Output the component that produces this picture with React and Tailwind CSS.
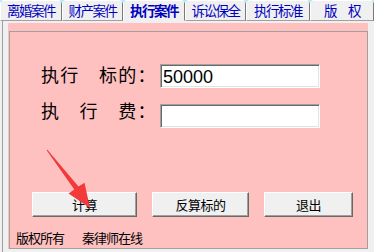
import React from "react";

const tabs = [
  { label: "离婚案件", cls: "w-[62px]" },
  { label: "财产案件", cls: "w-[61px]" },
  { label: "执行案件", cls: "w-[62px]", active: true },
  { label: "诉讼保全", cls: "w-[61px]" },
  { label: "执行标准", cls: "w-[64px]" },
  { label: "版　权", cls: "w-[64px]" },
];

function Field({ value }) {
  return (
    <div className="w-[160px] h-[24px] border border-t-[#a0a0a0] border-l-[#a0a0a0] border-r-white border-b-white shadow-[inset_1px_1px_0_#696969,inset_-1px_-1px_0_#e3e3e3] bg-white pl-[2px] pt-[2px] font-['Liberation_Sans',Arial,sans-serif] text-[18px] leading-[20px] text-black">
      {value}
    </div>
  );
}

function Btn({ children, cls }) {
  return (
    <div
      className={
        cls +
        " h-[25px] flex items-center justify-center bg-[#f0f0f0] border border-t-white border-l-white border-r-[#696969] border-b-[#696969] shadow-[inset_-1px_-1px_0_#a0a0a0] text-[13px] leading-[13px] tracking-[-0.5px] text-black"
      }
    >
      {children}
    </div>
  );
}

export default function App() {
  return (
    <div className="w-[374px] h-[252px] bg-[#f0f0f0] relative overflow-hidden font-['Noto_Sans_CJK_SC','Noto_Sans',sans-serif]">
      <div className="flex h-[21px] bg-[#b4eef8]">
        {tabs.map((t) => (
          <div
            key={t.label}
            className={
              t.cls +
              (t.active
                ? " font-bold border-b-[#f0f0f0]"
                : " border-b-[#a0a0a0]") +
              " h-[21px] flex justify-center pt-[3px] bg-[#f0f0f0] border border-l-white border-t-white border-r-[#7a7a7a] text-[13.5px] leading-[13px] tracking-[-1.5px] text-[#0000c0] [clip-path:polygon(3px_0,calc(100%_-_3px)_0,100%_3px,100%_100%,0_100%,0_3px)]"
            }
          >
            {t.label}
          </div>
        ))}
      </div>
      <div className="ml-[2px] h-[231px] border-l border-[#a0a0a0] pl-[5px] pt-[2px]">
        <div className="w-[360px] h-[226px] bg-[#ffc0c0] pl-[1px] pt-[8px]">
          <div className="h-full w-full border border-[#a0a0a0] flex flex-col text-black">
            <div className="mt-[32px] flex items-start pl-[31px] h-[24px]">
              <div className="w-[119px] mt-[1px] text-[18px] leading-[18px] tracking-[1.3px]">
                执行　标的：
              </div>
              <Field value="50000" />
            </div>
            <div className="mt-[13px] flex items-start pl-[31px]">
              <div className="w-[119px] text-[18px] leading-[18px] tracking-[1.3px]">
                执　行　费：
              </div>
              <div className="mt-[3px]">
                <Field value="" />
              </div>
            </div>
            <div className="mt-[64px] flex pl-[22px] gap-[15px]">
              <Btn cls="w-[105px]">计算</Btn>
              <Btn cls="w-[97px]">反算标的</Btn>
              <Btn cls="w-[89px]">退出</Btn>
            </div>
            <div className="mt-[13px] flex pl-[6px] text-[13px] leading-[15px] tracking-[-1px]">
              <span>版权所有</span>
              <span className="ml-[18px]">秦律师在线</span>
            </div>
          </div>
        </div>
      </div>
      <svg
        className="absolute left-0 top-0 pointer-events-none"
        width="374"
        height="252"
        viewBox="0 0 374 252"
      >
        <polygon
          points="47.4,149.7 78.5,186.5 84.5,182.8 90,208 68.5,193.5 74.3,189.5 46.6,150.3"
          fill="#f23a3a"
        />
      </svg>
    </div>
  );
}
